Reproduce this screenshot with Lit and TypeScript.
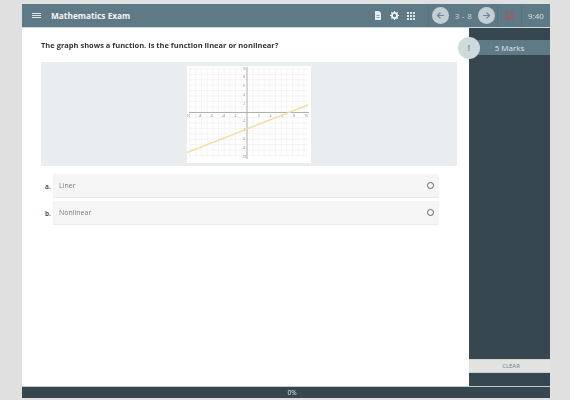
import { LitElement, css, html, svg } from 'lit'
import { customElement } from 'lit/decorators.js'

const gridXs = Array.from({ length: 21 }, (_, i) => 190 + i * 5.7)
const gridYs = Array.from({ length: 17 }, (_, i) => 69 + i * 5.4)
const xLabels = [-10, -8, -6, -4, -2, 2, 4, 6, 8, 10]
const yLabels = [10, 8, 6, 4, 2, -2, -4, -6, -8, -10]

@customElement('app-root')
export class AppRoot extends LitElement {
  static styles = css`
    :host {
      display: block;
      width: 570px;
      height: 400px;
      background: #e0e0e0;
      font-family: 'Open Sans', 'Liberation Sans', sans-serif;
      overflow: hidden;
    }
    .frame {
      width: 528px;
      height: 394px;
      margin-left: 22px;
      padding-top: 4px;
      display: flex;
      flex-direction: column;
      filter: blur(0.6px);
    }
    .topbar {
      height: 23px;
      flex: none;
      background: #5f7a87;
      border-bottom: 1px solid #cfd6d9;
      color: #fff;
      display: flex;
      align-items: center;
      font-size: 8px;
    }
    .menu {
      width: 9px;
      margin-left: 10px;
      display: flex;
      flex-direction: column;
      gap: 1px;
    }
    .menu span {
      height: 1px;
      background: #dfe6e9;
    }
    .title {
      margin-left: 10px;
      font-size: 8.3px;
      font-weight: 700;
      color: #f2f5f6;
    }
    .tools {
      margin-left: auto;
      display: flex;
      align-items: center;
    }
    .tools svg {
      display: block;
    }
    .icons {
      display: flex;
      align-items: center;
      gap: 8px;
      padding-right: 13px;
    }
    .pager {
      display: flex;
      align-items: center;
      width: 70px;
      height: 23px;
      box-sizing: border-box;
      padding-left: 3px;
      border-left: 1px solid #587280;
      border-right: 1px solid #587280;
      color: #cfd8dc;
    }
    .round {
      width: 17px;
      height: 17px;
      border-radius: 50%;
      background: #c3cfd4;
      display: flex;
      align-items: center;
      justify-content: center;
    }
    .count {
      width: 29px;
      text-align: center;
      letter-spacing: 0.3px;
    }
    .flag {
      width: 24px;
      height: 23px;
      box-sizing: border-box;
      display: flex;
      align-items: center;
      justify-content: center;
      border-right: 1px solid #587280;
    }
    .clock {
      width: 28px;
      text-align: center;
      color: #d8e0e3;
    }
    .body {
      flex: 1;
      display: flex;
      min-height: 0;
    }
    main {
      width: 447px;
      background: #fff;
      padding: 12px 11px 0 19px;
      box-sizing: border-box;
    }
    .question {
      font-size: 7.5px;
      font-weight: 700;
      color: #333;
      line-height: 11px;
      margin: 0 0 11px;
    }
    .figure {
      height: 104px;
      margin-right: 1px;
      background: #e9edf0;
      display: flex;
      align-items: center;
      justify-content: center;
    }
    .figure svg {
      display: block;
    }
    .tick {
      font-size: 3px;
      fill: #777;
      text-anchor: middle;
    }
    .options {
      margin: 8px 19px 0 0;
      display: flex;
      flex-direction: column;
      gap: 3px;
    }
    .option {
      display: flex;
      align-items: center;
      height: 24px;
    }
    .letter {
      width: 8px;
      margin-left: 4px;
      font-size: 6.5px;
      font-weight: 700;
      color: #455a64;
    }
    .box {
      flex: 1;
      height: 24px;
      background: #f5f5f5;
      border-bottom: 1px solid #e8ebed;
      box-sizing: border-box;
      padding: 0 5px 0 6px;
      display: flex;
      align-items: center;
      justify-content: space-between;
      font-size: 7px;
      color: #808080;
    }
    .radio {
      width: 5px;
      height: 5px;
      border: 1.7px solid #666;
      border-radius: 50%;
    }
    aside {
      flex: 1;
      background: #37474f;
      position: relative;
      display: flex;
      flex-direction: column;
    }
    .marks {
      margin-top: 12px;
      height: 15px;
      background: #5f7a87;
      color: #dfe6e9;
      font-size: 8px;
      line-height: 15px;
      text-align: center;
    }
    .badge {
      position: absolute;
      left: -11px;
      top: 9px;
      width: 22px;
      height: 22px;
      border-radius: 50%;
      background: #cfdadd;
      color: #7b929c;
      font-size: 8px;
      font-weight: 700;
      line-height: 22px;
      text-align: center;
    }
    .clear {
      margin-top: auto;
      margin-bottom: 13px;
      height: 14px;
      padding-left: 3px;
      background: #e2e3e1;
      border-top: 1px solid #d0d4d4;
      border-bottom: 1px solid #c9cfd1;
      box-sizing: border-box;
      color: #6f8089;
      font-size: 6px;
      line-height: 12px;
      text-align: center;
    }
    .progress {
      height: 12px;
      flex: none;
      padding-left: 12px;
      background: #37474f;
      border-top: 1px solid #c4cbce;
      box-sizing: border-box;
      color: #dfe6e9;
      font-size: 6.5px;
      line-height: 11px;
      text-align: center;
    }
  `

  private graph() {
    return svg`
      <rect x="187" y="66" width="124" height="97" fill="#fff"></rect>
      ${gridXs.map(x => svg`<line x1=${x} y1="68" x2=${x} y2="158" stroke="#ececec" stroke-width="0.6"></line>`)}
      ${gridYs.map(y => svg`<line x1="189" y1=${y} x2="308" y2=${y} stroke="#ececec" stroke-width="0.6"></line>`)}
      <line x1="189" y1="112.5" x2="309" y2="112.5" stroke="#b0b0b0" stroke-width="1"></line>
      <line x1="247" y1="67" x2="247" y2="159" stroke="#b0b0b0" stroke-width="1"></line>
      ${xLabels.map(n => svg`<text class="tick" x=${247 + n * 5.9} y="117">${n}</text>`)}
      ${yLabels.map(n => svg`<text class="tick" x="244" y=${113.5 + n * -4.4}>${n}</text>`)}
      <line x1="187" y1="152.5" x2="308" y2="105" stroke="#f3dc9e" stroke-width="1.5"></line>
    `
  }

  render() {
    return html`
      <div class="frame">
        <header class="topbar">
          <div class="menu"><span></span><span></span><span></span></div>
          <div class="title">Mathematics Exam</div>
          <div class="tools">
            <div class="icons">
              <svg width="8" height="9" viewBox="0 0 8 9">
                <path d="M1 0h4l2 2v7H1z" fill="#e6ecee"></path>
                <path d="M2.5 4.5h3M2.5 6.5h3" stroke="#7b929c" stroke-width="0.8"></path>
              </svg>
              <svg width="9" height="9" viewBox="0 0 9 9">
                <circle cx="4.5" cy="4.5" r="2.6" fill="none" stroke="#eef2f3" stroke-width="1.9"></circle>
                <path d="M4.5 0v9M0 4.5h9M1.3 1.3l6.4 6.4M7.7 1.3l-6.4 6.4" stroke="#eef2f3" stroke-width="1.1" stroke-dasharray="1.4 6.2 1.4"></path>
              </svg>
              <svg width="8" height="8" viewBox="0 0 8 8" fill="#dfe6e9">
                <path d="M0 0h2v2H0zM3 0h2v2H3zM6 0h2v2H6zM0 3h2v2H0zM3 3h2v2H3zM6 3h2v2H6zM0 6h2v2H0zM3 6h2v2H3zM6 6h2v2H6z"></path>
              </svg>
            </div>
            <div class="pager">
              <div class="round">
                <svg width="9" height="9" viewBox="0 0 9 9" fill="none" stroke="#6f8894" stroke-width="1.2">
                  <path d="M8 4.5H1.5M4.5 1.5l-3 3 3 3"></path>
                </svg>
              </div>
              <div class="count">3 - 8</div>
              <div class="round">
                <svg width="9" height="9" viewBox="0 0 9 9" fill="none" stroke="#6f8894" stroke-width="1.2">
                  <path d="M1 4.5h6.5M4.5 1.5l3 3-3 3"></path>
                </svg>
              </div>
            </div>
            <div class="flag">
              <svg width="7" height="9" viewBox="0 0 7 9" fill="none" stroke="#c0485a" stroke-width="1.1">
                <path d="M.8.8h5.4v7.4L3.5 6.2.8 8.2z"></path>
              </svg>
            </div>
            <div class="clock">9:40</div>
          </div>
        </header>
        <div class="body">
          <main>
            <p class="question">The graph shows a function. Is the function linear or nonlinear?</p>
            <div class="figure">
              <svg width="124" height="97" viewBox="187 66 124 97">${this.graph()}</svg>
            </div>
            <div class="options">
              <div class="option">
                <span class="letter">a.</span>
                <div class="box"><span>Liner</span><span class="radio"></span></div>
              </div>
              <div class="option">
                <span class="letter">b.</span>
                <div class="box"><span>Nonlinear</span><span class="radio"></span></div>
              </div>
            </div>
          </main>
          <aside>
            <div class="badge">!</div>
            <div class="marks">5 Marks</div>
            <div class="clear">CLEAR</div>
          </aside>
        </div>
        <footer class="progress">0%</footer>
      </div>
    `
  }
}
